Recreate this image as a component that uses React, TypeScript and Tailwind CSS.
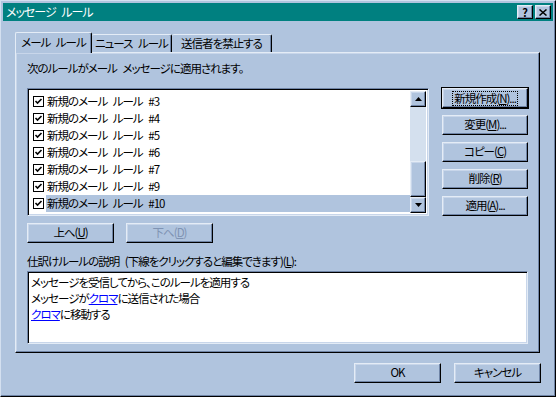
import * as React from "react"

const font = "[font-family:'MS_UI_Gothic','Noto_Sans_CJK_JP',sans-serif] [font-feature-settings:'palt'] tracking-[-1px] [word-spacing:4px]"

const raised =
  "border border-t-[#e4ecf6] border-l-[#e4ecf6] border-r-black border-b-black shadow-[inset_-1px_-1px_0_#6f84a6,inset_1px_1px_0_#c8d6ea]"
const sunken =
  "border border-t-[#6f84a6] border-l-[#6f84a6] border-r-[#e4ecf6] border-b-[#e4ecf6] shadow-[inset_1px_1px_0_#000,inset_-1px_-1px_0_#c8d6ea]"

function Btn({ children, className = "", disabled = false, focused = false }: { children: React.ReactNode; className?: string; disabled?: boolean; focused?: boolean }) {
  return (
    <div
      className={`flex h-[20px] items-center justify-center text-[11.5px] leading-none ${raised} ${disabled ? "text-[#7f93b3]" : "text-black"} ${focused ? "outline outline-1 outline-black" : ""} ${className}`}
    >
      {focused ? (
        <span className="border border-dotted border-black px-[1px] leading-[13px]">{children}</span>
      ) : (
        children
      )}
    </div>
  )
}

function Check() {
  return (
    <span className="flex size-[11px] shrink-0 items-center justify-center border border-black bg-white">
      <svg viewBox="0 0 9 9" className="size-[9px]">
        <path d="M1.5 4 L3.5 6 L7.5 2" stroke="black" strokeWidth="1.6" fill="none" />
      </svg>
    </span>
  )
}

const rules = ["#3", "#4", "#5", "#6", "#7", "#9", "#10"]

export default function App() {
  return (
    <div className={`h-[397px] w-[556px] overflow-hidden bg-[#b0c4de] text-[11.5px] text-black ${font}`}>
      <div className="flex h-full flex-col border border-t-[#d4e0f0] border-l-[#d4e0f0] border-r-black border-b-black p-[2px] shadow-[inset_-1px_-1px_0_#6f84a6]">
        {/* title bar */}
        <div className="flex h-[18px] items-center justify-between bg-[#008080] pl-[3px] pr-[2px]">
          <span className="text-[12px] leading-none text-white">メッセージ ルール</span>
          <div className="flex gap-[2px]">
            <div className={`flex h-[14px] w-[16px] items-center justify-center bg-[#b0c4de] text-[11px] font-bold leading-none tracking-normal ${raised}`}>?</div>
            <div className={`flex h-[14px] w-[16px] items-center justify-center bg-[#b0c4de] ${raised}`}>
              <svg viewBox="0 0 8 7" className="h-[7px] w-[8px]">
                <path d="M0.5 0.5 L7.5 6.5 M7.5 0.5 L0.5 6.5" stroke="black" strokeWidth="1.5" />
              </svg>
            </div>
          </div>
        </div>

        {/* tabs */}
        <div className="ml-[12px] mt-[11px] flex items-end">
          <div className="relative z-10 -mb-px flex h-[21px] w-[77px] items-center justify-center rounded-t-[2px] border border-b-0 border-l-[#e4ecf6] border-t-[#e4ecf6] border-r-black bg-[#b0c4de] shadow-[inset_-1px_0_0_#6f84a6]">
            メール ルール
          </div>
          <div className="flex h-[18px] w-[80px] items-center justify-center rounded-t-[2px] border border-b-0 border-l-0 border-t-[#e4ecf6] border-r-black shadow-[inset_-1px_0_0_#6f84a6]">
            ニュース ルール
          </div>
          <div className="flex h-[18px] w-[100px] items-center justify-center rounded-t-[2px] border border-b-0 border-l-0 border-t-[#e4ecf6] border-r-black shadow-[inset_-1px_0_0_#6f84a6]">
            送信者を禁止する
          </div>
        </div>

        {/* tab panel */}
        <div className={`ml-[12px] flex h-[301px] w-[525px] flex-col px-[11px] pt-[8px] ${raised}`}>
          <div className="h-[15px] leading-[15px]">次のルールがメール メッセージに適用されます。</div>

          <div className="mt-[12px] flex">
            <div className={`flex h-[128px] w-[403px] bg-white ${sunken}`}>
              <div className="flex flex-1 flex-col pl-[5px] pt-[4px]">
                {rules.map((r, i) => (
                  <div key={r} className="flex h-[17px] items-center">
                    <Check />
                    <span className={`ml-[2px] flex h-[17px] flex-1 items-center pl-px ${i === rules.length - 1 ? "bg-[#b0c4de]" : ""}`}>
                      新規のメール ルール {r}
                    </span>
                  </div>
                ))}
              </div>
              {/* scrollbar */}
              <div className="my-[2px] mr-[2px] flex w-[16px] flex-col bg-[#d4e0ee]">
                <div className={`flex h-[16px] items-center justify-center bg-[#b0c4de] ${raised}`}>
                  <svg viewBox="0 0 7 4" className="h-[4px] w-[7px]"><path d="M3.5 0 L7 4 L0 4 Z" fill="black" /></svg>
                </div>
                <div className="flex-1" />
                <div className={`h-[36px] bg-[#b0c4de] ${raised}`} />
                <div className={`flex h-[16px] items-center justify-center bg-[#b0c4de] ${raised}`}>
                  <svg viewBox="0 0 7 4" className="h-[4px] w-[7px]"><path d="M0 0 L7 0 L3.5 4 Z" fill="black" /></svg>
                </div>
              </div>
            </div>

            <div className="ml-[13px] flex w-[86px] flex-col gap-[7px]">
              <Btn focused>新規作成(<u>N</u>)...</Btn>
              <Btn>変更(<u>M</u>)...</Btn>
              <Btn>コピー(<u>C</u>)</Btn>
              <Btn>削除(<u>R</u>)</Btn>
              <Btn>適用(<u>A</u>)...</Btn>
            </div>
          </div>

          <div className="mt-[7px] flex gap-[12px]">
            <Btn className="w-[87px]">上へ(<u>U</u>)</Btn>
            <Btn className="w-[87px]" disabled>下へ(<u>D</u>)</Btn>
          </div>

          <div className="mt-[11px] h-[15px] leading-[15px]">
            仕訳けルールの説明 (下線をクリックすると編集できます)(<u>L</u>):
          </div>

          <div className={`mt-[2px] h-[73px] w-[501px] bg-white px-[3px] pt-[2px] ${sunken}`}>
            <div className="leading-[16px]">メッセージを受信してから、このルールを適用する</div>
            <div className="leading-[16px]">
              メッセージが<span className="text-[#0000ff] underline">クロマ</span>に送信された場合
            </div>
            <div className="leading-[16px]">
              <span className="text-[#0000ff] underline">クロマ</span>に移動する
            </div>
          </div>
        </div>

        {/* dialog buttons */}
        <div className="mr-[12px] mt-[10px] flex justify-end gap-[13px]">
          <Btn className="w-[87px]">OK</Btn>
          <Btn className="w-[87px]">キャンセル</Btn>
        </div>
      </div>
    </div>
  )
}
